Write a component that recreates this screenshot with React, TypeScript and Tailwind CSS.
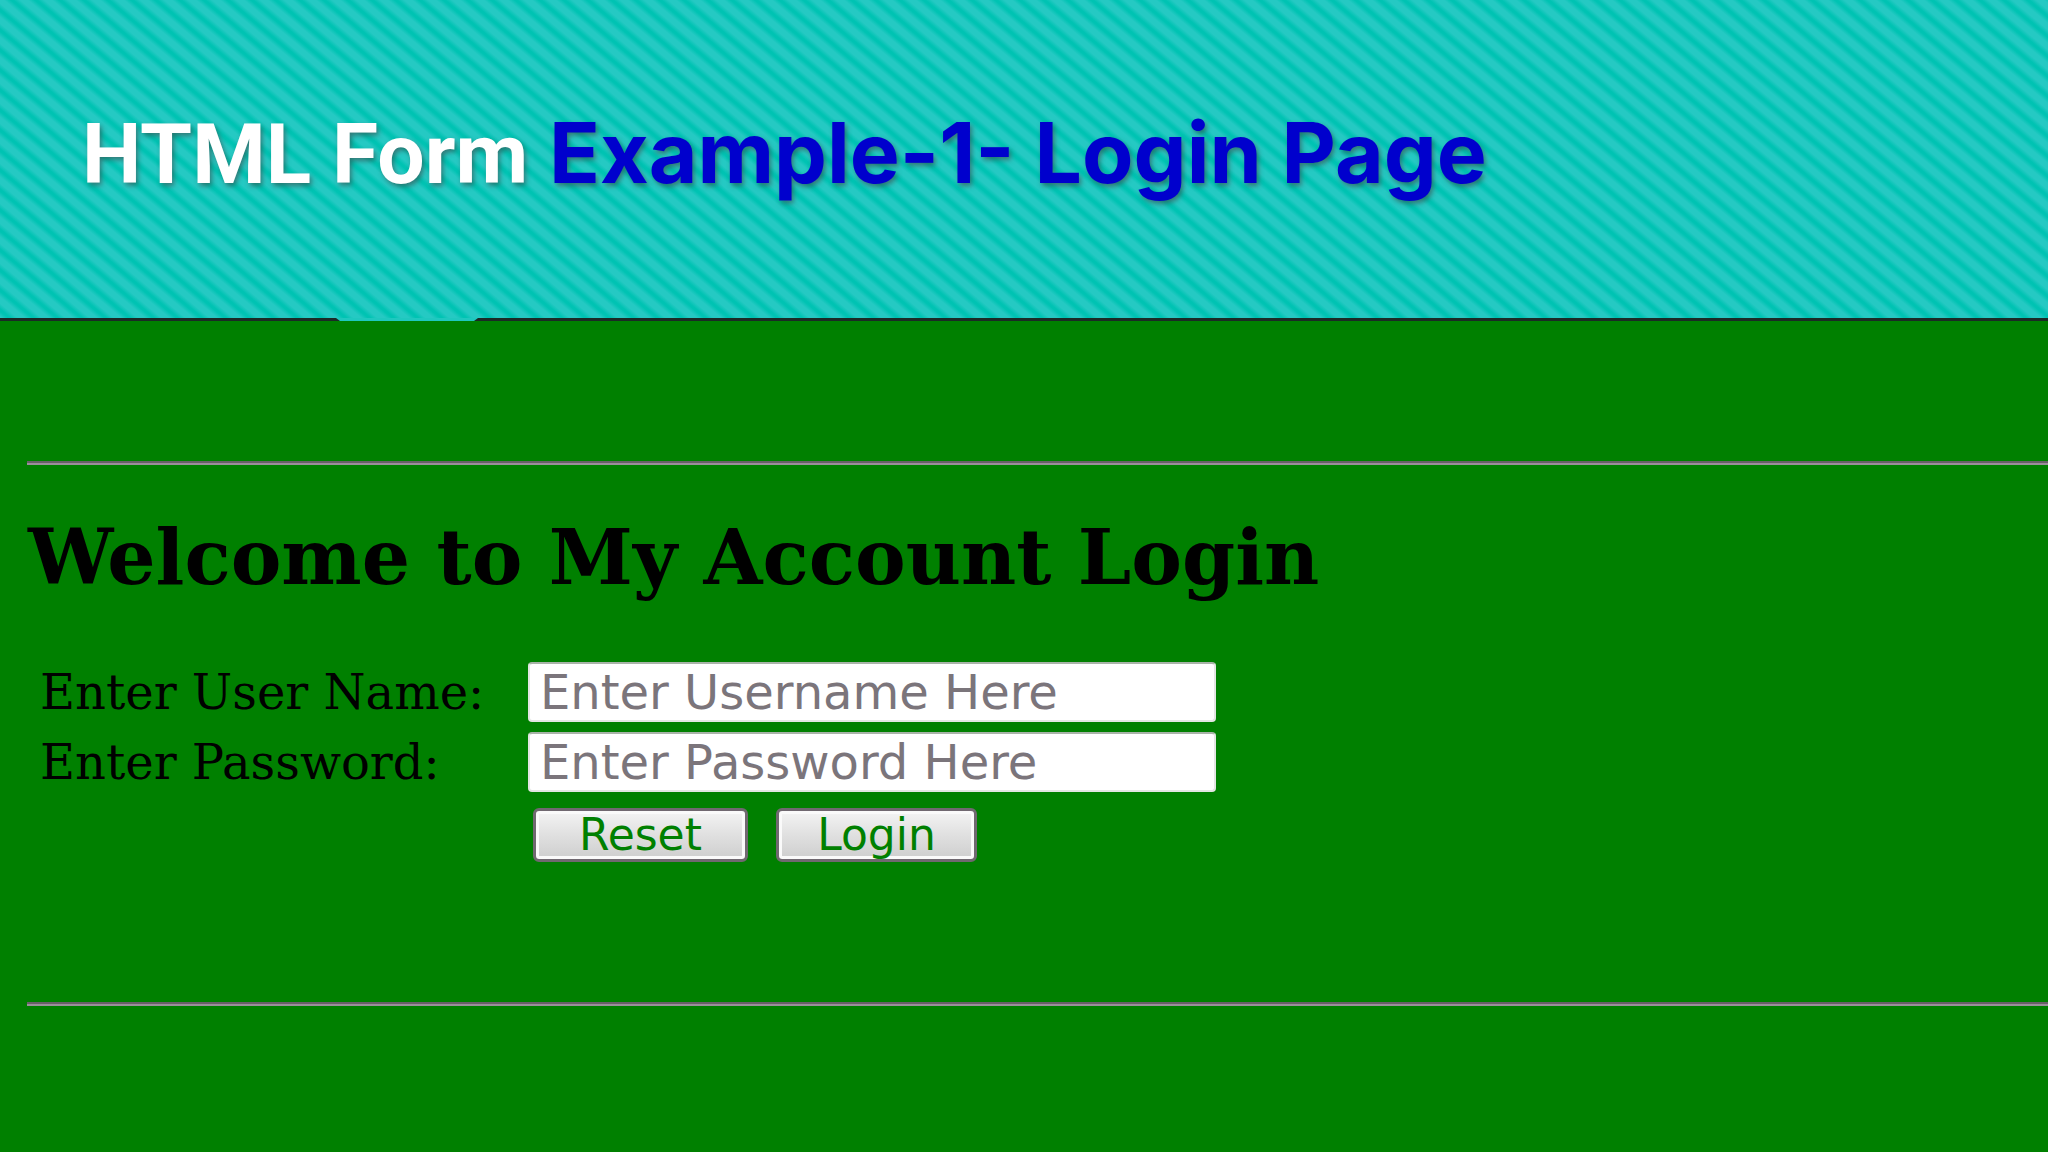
const fieldClass =
  "block h-[60px] w-[688px] rounded-sm border-2 border-[#e3e6e3] border-t-[#a9b3a9] bg-white px-2.5 font-['DejaVu_Sans'] text-[48px] leading-none text-[#444] placeholder:text-[#7b757b] placeholder:opacity-100 outline-none";

const labelClass = "font-['DejaVu_Serif'] text-[48px] leading-[60px] whitespace-nowrap text-black";

const buttonClass =
  "h-[54px] rounded-md border-3 border-[#706870] bg-linear-to-b from-[#f4f4f4] via-[#e0e0e0] to-[#cecece] font-['DejaVu_Sans'] text-[44px] leading-[42px] text-[#008000] shadow-[inset_0_0_0_3px_#fafafa]";

function Rule() {
  return <hr className="ml-[27px] h-1 border-0 border-t-2 border-[#686068] bg-[#9b8f9b]" />;
}

export default function App() {
  return (
    <div className="flex min-h-screen flex-col overflow-hidden bg-[#008000]">
      <header className="relative flex h-[321px] shrink-0 items-center border-b-3 border-[#1b2a26] bg-[linear-gradient(to_top_right,#25c9c3_0%,#25c9c3_8%,#00c3b3_22%,#00c3b3_28%,#25c9c3_42%,#25c9c3_58%,#00c3b3_72%,#00c3b3_78%,#25c9c3_92%,#25c9c3_100%)] bg-size-[24px_20px] px-[82px] pb-3">
        <h1 className="text-[84px] leading-[100px] font-bold whitespace-nowrap text-white [text-shadow:2px_3px_5px_rgba(60,70,70,0.6)]">
          <span className="font-['Roboto']">HTML Form </span>
          <span className="font-['Inter'] text-[#0000cd]">Example-1- Login Page</span>
        </h1>
        <svg
          className="absolute -bottom-[3px] left-[336px]"
          width="142"
          height="3"
          viewBox="0 0 142 3"
          aria-hidden="true"
        >
          <path d="M0 0H142L138 3H4Z" fill="#1fc8bf" />
        </svg>
      </header>

      <main className="flex flex-col pt-[140px]">
        <Rule />
        <h2 className="mt-12 ml-[28px] font-['DejaVu_Serif'] text-[76px] leading-[90px] font-bold whitespace-nowrap text-black">
          Welcome to My Account Login
        </h2>
        <form
          className="mt-[59px] ml-10 grid grid-cols-[488px_auto] items-center justify-start gap-y-2.5"
          onSubmit={(e) => e.preventDefault()}
        >
          <label htmlFor="username" className={labelClass}>
            Enter User Name:
          </label>
          <input id="username" type="text" placeholder="Enter Username Here" className={fieldClass} />
          <label htmlFor="password" className={labelClass}>
            Enter Password:
          </label>
          <input id="password" type="password" placeholder="Enter Password Here" className={fieldClass} />
          <div className="col-start-2 mt-1.5 ml-[5px] flex gap-7">
            <button type="reset" className={`${buttonClass} w-[215px]`}>
              Reset
            </button>
            <button type="submit" className={`${buttonClass} w-[201px]`}>
              Login
            </button>
          </div>
        </form>
        <div className="mt-[140px]">
          <Rule />
        </div>
      </main>
    </div>
  );
}
